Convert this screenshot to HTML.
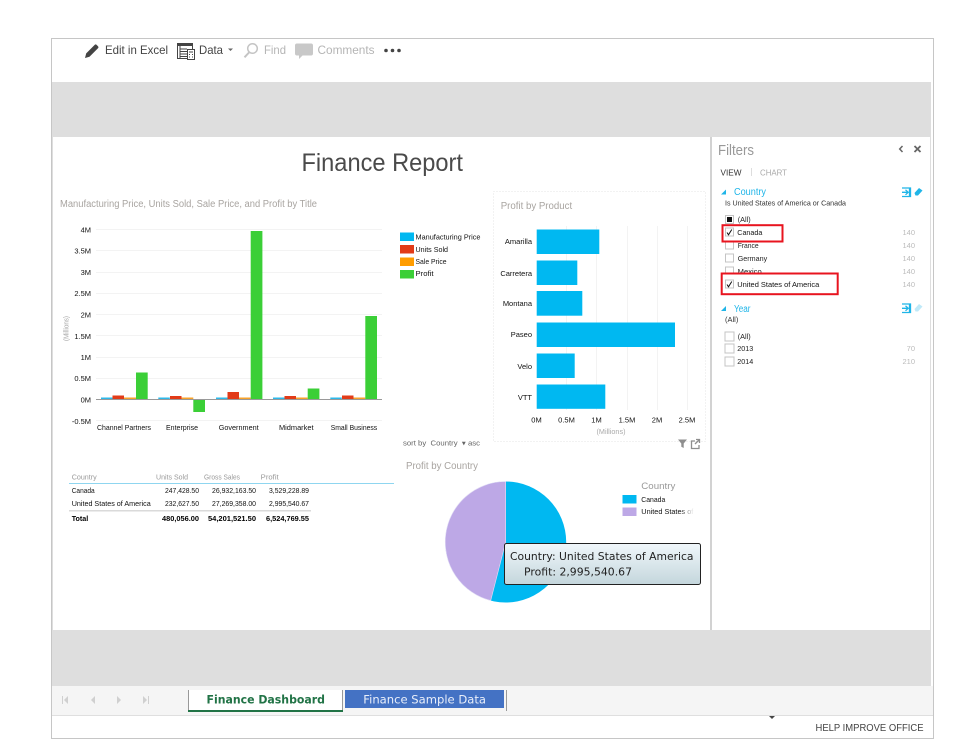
<!DOCTYPE html>
<html>
<head>
<meta charset="utf-8">
<title>Finance Report</title>
<style>
html,body{margin:0;padding:0;background:#fff;width:953px;height:745px;overflow:hidden}
svg{display:block}
text{font-family:"Liberation Sans",sans-serif;white-space:pre}
.s{font-size:7.5px;fill:#111}
.g{font-size:7.5px;fill:#999}
.lg{font-size:7px;fill:#aaa}
.b{font-size:7.5px;fill:#000;font-weight:bold}
.t{font-size:10px;fill:#a8a4a0}
.f{font-size:7.5px;fill:#222}
.c{font-size:7.5px;fill:#bbb}
.tb{font-size:12px;fill:#444}
.tbg{font-size:12px;fill:#b5b5b5}
.bl{font-size:10px;fill:#1fb5e8}
.dj{font-family:"DejaVu Sans",sans-serif}
</style>
</head>
<body>
<svg width="953" height="745" viewBox="0 0 953 745" xmlns="http://www.w3.org/2000/svg">
<defs>
<linearGradient id="tip" x1="0" y1="0" x2="0" y2="1"><stop offset="0" stop-color="#f0f7fb"/><stop offset="1" stop-color="#c4d6dc"/></linearGradient>
<linearGradient id="fade" x1="0" y1="0" x2="1" y2="0"><stop offset="0" stop-color="#fff" stop-opacity="0"/><stop offset="1" stop-color="#fff"/></linearGradient>
</defs>

<!-- frame -->
<rect x="51.5" y="38.5" width="882" height="700" fill="#fff" stroke="#c6c6c6"/>
<rect x="52" y="82" width="879" height="55" fill="#dedede"/>
<rect x="52" y="137" width="1" height="493" fill="#dedede"/>
<rect x="930" y="137" width="1" height="493" fill="#dedede"/>
<rect x="52" y="630" width="879" height="56" fill="#dedede"/>
<rect x="710" y="137" width="2" height="493" fill="#d2d2d2"/>

<!-- toolbar -->
<path d="M85 58l1.200-4.600 8.600-8.600a1.200 1.200 0 0 1 1.700 0l1.600 1.600a1.200 1.200 0 0 1 0 1.700l-8.600 8.600z" fill="#444"/>
<text class="tb" x="105" y="54" textLength="63" lengthAdjust="spacingAndGlyphs">Edit in Excel</text>
<rect x="177.500" y="43.500" width="15" height="15" fill="#fff" stroke="#444"/>
<rect x="177" y="43" width="16" height="3" fill="#444"/>
<path d="M180 49h7M180 51.500h7M180 54h7M180 56.500h7M180 46v12" stroke="#444" stroke-width="1" fill="none"/>
<rect x="187.500" y="49.500" width="7" height="10" fill="#fff" stroke="#444"/>
<path d="M189 52h4M189 54.500h1M192 54.500h1M189 57h1M192 57h1" stroke="#444"/>
<text class="tb" x="199" y="54" textLength="24" lengthAdjust="spacingAndGlyphs">Data</text>
<path d="M228 48.500h5l-2.500 2.500z" fill="#666"/>
<circle cx="252.500" cy="48.500" r="4.800" fill="none" stroke="#c4c4c4" stroke-width="1.500"/>
<path d="M249 52.500l-4.500 4.800" stroke="#c4c4c4" stroke-width="2" fill="none"/>
<text class="tbg" x="264" y="54" textLength="22" lengthAdjust="spacingAndGlyphs">Find</text>
<path d="M297 43.500h14a2 2 0 0 1 2 2v8a2 2 0 0 1-2 2h-8.500l-3.500 3.500v-3.500h-2a2 2 0 0 1-2-2v-8a2 2 0 0 1 2-2z" fill="#c8c8c8"/>
<text class="tbg" x="317.500" y="54" textLength="57" lengthAdjust="spacingAndGlyphs">Comments</text>
<circle cx="386" cy="50.500" r="1.800" fill="#444"/><circle cx="392.500" cy="50.500" r="1.800" fill="#444"/><circle cx="399" cy="50.500" r="1.800" fill="#444"/>

<!-- heading -->
<text x="301.500" y="171" font-size="25" fill="#4a4a4a" textLength="161.500" lengthAdjust="spacingAndGlyphs">Finance Report</text>
<text class="t" x="60" y="207" textLength="257" lengthAdjust="spacingAndGlyphs">Manufacturing Price, Units Sold, Sale Price, and Profit by Title</text>

<!-- column chart -->
<g fill="#f3f3f3">
<rect x="96" y="229" width="286" height="1"/><rect x="96" y="250" width="286" height="1"/><rect x="96" y="272" width="286" height="1"/><rect x="96" y="293" width="286" height="1"/><rect x="96" y="314" width="286" height="1"/><rect x="96" y="335" width="286" height="1"/><rect x="96" y="357" width="286" height="1"/><rect x="96" y="378" width="286" height="1"/><rect x="96" y="420" width="286" height="1"/>
</g>
<g>
<text class="s" x="91" y="232.500" text-anchor="end">4M</text>
<text class="s" x="91" y="253.500" text-anchor="end">3.5M</text>
<text class="s" x="91" y="275" text-anchor="end">3M</text>
<text class="s" x="91" y="296" text-anchor="end">2.5M</text>
<text class="s" x="91" y="317.500" text-anchor="end">2M</text>
<text class="s" x="91" y="339" text-anchor="end">1.5M</text>
<text class="s" x="91" y="360" text-anchor="end">1M</text>
<text class="s" x="91" y="381" text-anchor="end">0.5M</text>
<text class="s" x="91" y="402.500" text-anchor="end">0M</text>
<text class="s" x="91" y="424" text-anchor="end">-0.5M</text>
</g>
<text class="lg" transform="translate(68.500 341) rotate(-90)" textLength="25" lengthAdjust="spacingAndGlyphs">(Millions)</text>
<g>
<rect x="101" y="397.500" width="11.500" height="2" fill="#2cb8ea"/><rect x="112.500" y="395.500" width="11.500" height="4" fill="#e23b18"/><rect x="124" y="397.500" width="12" height="2" fill="#f7a229"/><rect x="136" y="372.500" width="11.700" height="27" fill="#3bcf37"/>
<rect x="158.300" y="397.500" width="11.500" height="2" fill="#2cb8ea"/><rect x="170" y="396" width="11.500" height="3.500" fill="#e23b18"/><rect x="181.500" y="397.500" width="11.800" height="2" fill="#f7a229"/><rect x="193.300" y="399" width="11.700" height="13" fill="#3bcf37"/>
<rect x="216" y="397.500" width="11.500" height="2" fill="#2cb8ea"/><rect x="227.500" y="392" width="11.500" height="7.500" fill="#e23b18"/><rect x="239" y="397.500" width="11.700" height="2" fill="#f7a229"/><rect x="250.700" y="231" width="11.700" height="168.500" fill="#3bcf37"/>
<rect x="273" y="397.500" width="11.500" height="2" fill="#2cb8ea"/><rect x="284.500" y="396" width="11.500" height="3.500" fill="#e23b18"/><rect x="296" y="397.500" width="11.700" height="2" fill="#f7a229"/><rect x="307.700" y="388.500" width="11.700" height="11" fill="#3bcf37"/>
<rect x="330.300" y="397.500" width="11.500" height="2" fill="#2cb8ea"/><rect x="342" y="395.500" width="11.500" height="4" fill="#e23b18"/><rect x="353.500" y="397.500" width="11.800" height="2" fill="#f7a229"/><rect x="365.300" y="316" width="11.700" height="83.500" fill="#3bcf37"/>
</g>
<rect x="96" y="399" width="286" height="1" fill="#999"/>
<text class="s" x="97" y="430" textLength="54" lengthAdjust="spacingAndGlyphs">Channel Partners</text>
<text class="s" x="166" y="430" textLength="32" lengthAdjust="spacingAndGlyphs">Enterprise</text>
<text class="s" x="218.700" y="430" textLength="40" lengthAdjust="spacingAndGlyphs">Government</text>
<text class="s" x="279" y="430" textLength="34.500" lengthAdjust="spacingAndGlyphs">Midmarket</text>
<text class="s" x="330.700" y="430" textLength="46.500" lengthAdjust="spacingAndGlyphs">Small Business</text>

<!-- legend -->
<rect x="400" y="232.500" width="14" height="8.500" fill="#00b8f1"/><rect x="400" y="245" width="14" height="8.500" fill="#e23b18"/><rect x="400" y="257.500" width="14" height="8.500" fill="#ff9c00"/><rect x="400" y="270" width="14" height="8.500" fill="#3bcf37"/>
<text class="s" x="415.500" y="239.500" textLength="65" lengthAdjust="spacingAndGlyphs">Manufacturing Price</text>
<text class="s" x="415.500" y="252" textLength="32.500" lengthAdjust="spacingAndGlyphs">Units Sold</text>
<text class="s" x="415.500" y="264" textLength="31" lengthAdjust="spacingAndGlyphs">Sale Price</text>
<text class="s" x="415.500" y="276" textLength="18" lengthAdjust="spacingAndGlyphs">Profit</text>
<text class="s" style="fill:#666" x="403" y="445.500" textLength="77" lengthAdjust="spacingAndGlyphs">sort by  Country  ▾ asc</text>

<!-- profit by product -->
<rect x="493.500" y="191.500" width="212" height="250" fill="none" stroke="#e6e6e6" stroke-dasharray="1 2"/>
<text class="t" x="500.700" y="209" textLength="71.500" lengthAdjust="spacingAndGlyphs">Profit by Product</text>
<g fill="#f3f3f3"><rect x="566" y="226" width="1" height="184"/><rect x="596" y="226" width="1" height="184"/><rect x="627" y="226" width="1" height="184"/><rect x="657" y="226" width="1" height="184"/><rect x="687" y="226" width="1" height="184"/></g>
<g fill="#00b8f1">
<rect x="536.700" y="229.500" width="62.600" height="24.500"/><rect x="536.700" y="260.500" width="40.600" height="24.500"/><rect x="536.700" y="291" width="45.600" height="24.700"/><rect x="536.700" y="322.500" width="138.300" height="24.500"/><rect x="536.700" y="353.500" width="38" height="24.500"/><rect x="536.700" y="384.500" width="68.600" height="24.300"/>
</g>
<text class="s" x="532" y="244" text-anchor="end">Amarilla</text>
<text class="s" x="532" y="276" text-anchor="end">Carretera</text>
<text class="s" x="532" y="306" text-anchor="end">Montana</text>
<text class="s" x="532" y="337" text-anchor="end">Paseo</text>
<text class="s" x="532" y="369" text-anchor="end">Velo</text>
<text class="s" x="532" y="400" text-anchor="end">VTT</text>
<text class="s" x="536.500" y="422.500" text-anchor="middle">0M</text>
<text class="s" x="566.500" y="422.500" text-anchor="middle">0.5M</text>
<text class="s" x="596.500" y="422.500" text-anchor="middle">1M</text>
<text class="s" x="627" y="422.500" text-anchor="middle">1.5M</text>
<text class="s" x="657" y="422.500" text-anchor="middle">2M</text>
<text class="s" x="687" y="422.500" text-anchor="middle">2.5M</text>
<text class="lg" x="611" y="434" text-anchor="middle" textLength="29" lengthAdjust="spacingAndGlyphs">(Millions)</text>
<path d="M678 439.500h9l-3.300 4v4.500l-2.400-1.200v-3.300z" fill="#8e8e8e"/>
<path d="M695 441h-3.500v7.500h7.500v-3.500" fill="none" stroke="#8e8e8e" stroke-width="1.300"/>
<path d="M696 439.500h3.500v3.500M699 440l-4 4" fill="none" stroke="#8e8e8e" stroke-width="1.300"/>

<!-- table -->
<text class="g" x="71.700" y="479.500" textLength="25" lengthAdjust="spacingAndGlyphs">Country</text>
<text class="g" x="156" y="479.500" textLength="32" lengthAdjust="spacingAndGlyphs">Units Sold</text>
<text class="g" x="204" y="479.500" textLength="36" lengthAdjust="spacingAndGlyphs">Gross Sales</text>
<text class="g" x="260.700" y="479.500" textLength="18" lengthAdjust="spacingAndGlyphs">Profit</text>
<rect x="69" y="483" width="325" height="1" fill="#8fd6f0"/>
<text class="s" x="71.700" y="493" textLength="23" lengthAdjust="spacingAndGlyphs">Canada</text>
<text class="s" x="199" y="493" text-anchor="end" textLength="34" lengthAdjust="spacingAndGlyphs">247,428.50</text>
<text class="s" x="256" y="493" text-anchor="end" textLength="44" lengthAdjust="spacingAndGlyphs">26,932,163.50</text>
<text class="s" x="309" y="493" text-anchor="end" textLength="40" lengthAdjust="spacingAndGlyphs">3,529,228.89</text>
<text class="s" x="71.700" y="506" textLength="79" lengthAdjust="spacingAndGlyphs">United States of America</text>
<text class="s" x="199" y="506" text-anchor="end" textLength="34" lengthAdjust="spacingAndGlyphs">232,627.50</text>
<text class="s" x="256" y="506" text-anchor="end" textLength="44" lengthAdjust="spacingAndGlyphs">27,269,358.00</text>
<text class="s" x="309" y="506" text-anchor="end" textLength="40" lengthAdjust="spacingAndGlyphs">2,995,540.67</text>
<rect x="69" y="510" width="242" height="1.500" fill="#dadada"/>
<text class="b" x="71.700" y="521" textLength="16.500" lengthAdjust="spacingAndGlyphs">Total</text>
<text class="b" x="199" y="521" text-anchor="end" textLength="37" lengthAdjust="spacingAndGlyphs">480,056.00</text>
<text class="b" x="256" y="521" text-anchor="end" textLength="48" lengthAdjust="spacingAndGlyphs">54,201,521.50</text>
<text class="b" x="309" y="521" text-anchor="end" textLength="43" lengthAdjust="spacingAndGlyphs">6,524,769.55</text>

<!-- pie -->
<text class="t" x="406" y="469" textLength="72" lengthAdjust="spacingAndGlyphs">Profit by Country</text>
<circle cx="505.700" cy="542" r="60.500" fill="#00b8f1"/>
<path d="M505.700 542L490.700 600.600A60.500 60.500 0 0 1 505.700 481.500z" fill="#bda8e6" stroke="#e5def5" stroke-width=".6"/>
<text x="641.300" y="489" font-size="9.500" fill="#999" textLength="34" lengthAdjust="spacingAndGlyphs">Country</text>
<rect x="622.500" y="495" width="14" height="8.500" fill="#00b8f1"/><rect x="622.500" y="507.500" width="14" height="8.500" fill="#bda8e6"/>
<text class="s" x="641.300" y="502" textLength="24" lengthAdjust="spacingAndGlyphs">Canada</text>
<text class="s" x="641.300" y="514" textLength="52" lengthAdjust="spacingAndGlyphs">United States of</text>
<rect x="680" y="507" width="14" height="10" fill="url(#fade)"/>
<rect x="504.500" y="543.500" width="196" height="41" rx="2" fill="url(#tip)" stroke="#222"/>
<text class="dj" x="510" y="560" font-size="11" fill="#222" textLength="183.500" lengthAdjust="spacingAndGlyphs">Country: United States of America</text>
<text class="dj" x="524" y="575.500" font-size="11" fill="#222" textLength="108" lengthAdjust="spacingAndGlyphs">Profit: 2,995,540.67</text>

<!-- filters -->
<text x="718" y="155" font-size="15" fill="#999" textLength="36" lengthAdjust="spacingAndGlyphs">Filters</text>
<path d="M902.500 146l-2.800 3 2.800 3" fill="none" stroke="#666" stroke-width="1.500"/>
<path d="M914.500 146l6 6M920.500 146l-6 6" fill="none" stroke="#666" stroke-width="1.800"/>
<text x="720.500" y="175.500" font-size="8.500" fill="#333" textLength="21" lengthAdjust="spacingAndGlyphs">VIEW</text>
<rect x="751" y="168" width="1" height="8" fill="#ddd"/>
<text x="760" y="175.500" font-size="8.500" fill="#aaa" textLength="27" lengthAdjust="spacingAndGlyphs">CHART</text>

<path d="M726 189.500v5h-5z" fill="#1fb5e8"/>
<text class="bl" x="734" y="195" textLength="32" lengthAdjust="spacingAndGlyphs">Country</text>
<path d="M902 188h8.500v8.500h-8.500M902 192.300h6M905.500 189.800l2.700 2.500-2.700 2.500M909.500 188v8.500" fill="none" stroke="#1fb5e8" stroke-width="1.300"/>
<path d="M914.500 193l4.500-5 3.500 2.500-4.500 5h-2.500z" fill="#1fb5e8"/>
<text class="s" style="fill:#333" x="725" y="205.500" textLength="121" lengthAdjust="spacingAndGlyphs">Is United States of America or Canada</text>

<g fill="#fff" stroke="#c4c4c4">
<rect x="725.500" y="215.500" width="8" height="8"/><rect x="725.500" y="228" width="8" height="8"/><rect x="725.500" y="241" width="8" height="8"/><rect x="725.500" y="254" width="8" height="8"/><rect x="725.500" y="267" width="8" height="8"/><rect x="725.500" y="280" width="8" height="8"/>
<rect x="725" y="332" width="9" height="9"/><rect x="725" y="344" width="9" height="9"/><rect x="725" y="357" width="9" height="9"/>
</g>
<rect x="727" y="217" width="5" height="5" fill="#111"/>
<text class="f" x="737.700" y="222" textLength="13" lengthAdjust="spacingAndGlyphs">(All)</text>
<text class="f" x="737.700" y="248" textLength="21" lengthAdjust="spacingAndGlyphs">France</text>
<text class="f" x="737.700" y="261" textLength="29.500" lengthAdjust="spacingAndGlyphs">Germany</text>
<text class="f" x="737.700" y="274" textLength="24" lengthAdjust="spacingAndGlyphs">Mexico</text>
<text class="c" x="915" y="235" text-anchor="end">140</text>
<text class="c" x="915" y="248" text-anchor="end">140</text>
<text class="c" x="915" y="261" text-anchor="end">140</text>
<text class="c" x="915" y="274" text-anchor="end">140</text>
<text class="c" x="915" y="287" text-anchor="end">140</text>

<!-- red highlight boxes -->
<rect x="722.500" y="225.200" width="60" height="16.300" fill="#fff" stroke="#e8141f" stroke-width="2"/>
<rect x="721.700" y="273.500" width="116" height="20.700" fill="#fff" stroke="#e8141f" stroke-width="2"/>
<rect x="725.500" y="228" width="8" height="8" fill="#fff" stroke="#c4c4c4"/>
<rect x="725.500" y="280" width="8" height="8" fill="#fff" stroke="#c4c4c4"/>
<path d="M727 232.500l1.500 2.300 3.300-5.300M727 284.500l1.500 2.300 3.300-5.300" fill="none" stroke="#111" stroke-width="1"/>
<text class="f" style="fill:#111" x="737.300" y="235" textLength="25" lengthAdjust="spacingAndGlyphs">Canada</text>
<text class="f" style="fill:#111" x="737.300" y="287" textLength="82" lengthAdjust="spacingAndGlyphs">United States of America</text>

<path d="M726 306v5h-5z" fill="#1fb5e8"/>
<text class="bl" x="734" y="312" textLength="16.500" lengthAdjust="spacingAndGlyphs">Year</text>
<path d="M902 304h8.500v8.500h-8.500M902 308.300h6M905.500 305.800l2.700 2.500-2.700 2.500M909.500 304v8.500" fill="none" stroke="#1fb5e8" stroke-width="1.300"/>
<path d="M914.500 309l4.500-5 3.500 2.500-4.500 5h-2.500z" fill="#bfe9f8"/>
<text class="s" style="fill:#333" x="725" y="322">(All)</text>
<text class="f" x="737.700" y="339" textLength="13" lengthAdjust="spacingAndGlyphs">(All)</text>
<text class="f" x="737.300" y="351" textLength="16" lengthAdjust="spacingAndGlyphs">2013</text>
<text class="f" x="737.300" y="364" textLength="16" lengthAdjust="spacingAndGlyphs">2014</text>
<text class="c" x="915" y="351" text-anchor="end">70</text>
<text class="c" x="915" y="364" text-anchor="end">210</text>

<!-- sheet tabs -->
<rect x="52" y="686" width="881" height="29" fill="#f5f5f5"/>
<rect x="52" y="715" width="881" height="1" fill="#dfdfdf"/>
<g fill="#d0d0d0">
<path d="M62 696h1v8h-1zM68 696v8l-4-4z"/><path d="M95 696v8l-4-4z"/><path d="M117 696l4 4-4 4z"/><path d="M143 696l4 4-4 4zM148 696h1v8h-1z"/>
</g>
<rect x="188" y="690" width="154.500" height="20" fill="#fff"/>
<rect x="188" y="690" width="1" height="21" fill="#999"/>
<rect x="342" y="690" width="1" height="21" fill="#999"/>
<rect x="188" y="710" width="155" height="2" fill="#217346"/>
<text class="dj" x="206.500" y="703.500" font-size="11.500" font-weight="bold" fill="#217346" textLength="118.500" lengthAdjust="spacingAndGlyphs">Finance Dashboard</text>
<rect x="345" y="690" width="159" height="18" fill="#4472c4"/>
<rect x="506" y="690" width="1" height="21" fill="#999"/>
<text class="dj" x="363.300" y="703.500" font-size="11.500" fill="#e8eefa" textLength="122.700" lengthAdjust="spacingAndGlyphs">Finance Sample Data</text>

<path d="M769 716h6l-3 3z" fill="#444"/>
<text x="815.500" y="731" font-size="10.500" fill="#444" textLength="108" lengthAdjust="spacingAndGlyphs">HELP IMPROVE OFFICE</text>
</svg>
</body>
</html>
